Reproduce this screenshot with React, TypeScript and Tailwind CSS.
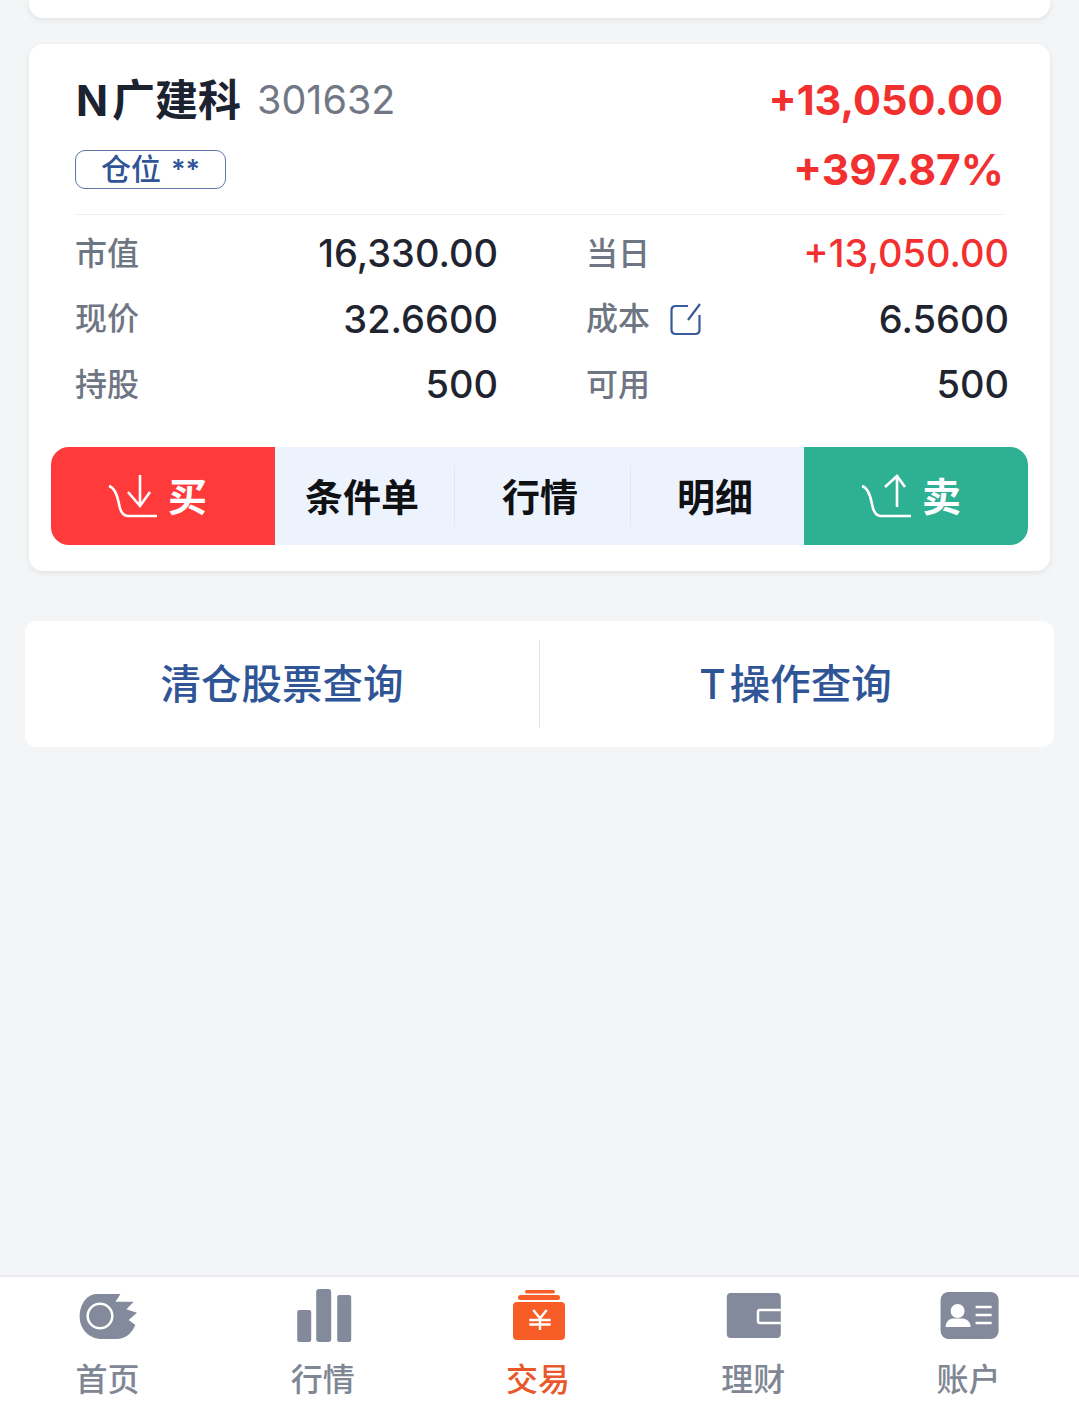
import React from "react";

const rows = [
  { left: "市值", leftValue: "16,330.00", right: "当日", rightValue: "+13,050.00", rise: true },
  { left: "现价", leftValue: "32.6600", right: "成本", rightValue: "6.5600", edit: true },
  { left: "持股", leftValue: "500", right: "可用", rightValue: "500" },
];

const HomeIcon = () => (
  <svg width="60" height="56" viewBox="0 0 60 56" fill="none">
    <path
      d="M19 6H42.4L37.5 13.7H55.7L48.4 21.3L59 24.7L50.7 32L57.4 37C54 44 49 51 38 51H24C11 51 1.7 41 1.7 28.7C1.7 16 9 6 19 6Z"
      fill="#828a9b"
    />
    <circle cx="22" cy="28" r="12.3" stroke="#fff" strokeWidth="2.5" />
  </svg>
);

const MarketIcon = () => (
  <svg width="60" height="56" viewBox="0 0 60 56" fill="#828a9b">
    <rect x="4.2" y="22" width="14" height="32" rx="2" />
    <rect x="23.2" y="1" width="15" height="53" rx="3" />
    <rect x="44.2" y="7" width="14" height="47" rx="2" />
  </svg>
);

const TradeIcon = () => (
  <svg width="60" height="56" viewBox="0 0 60 56" fill="none">
    <rect x="5" y="14" width="52" height="38" rx="4" fill="#f95d27" />
    <rect x="10" y="7" width="42" height="5" rx="2.5" fill="#f95d27" />
    <rect x="17" y="2" width="30" height="3.5" rx="1.75" fill="#f95d27" />
    <path d="M25.3 22L32 30.3L38.7 22M21.3 32H42.7M21.3 36.5H42.7M32 30.3V42" stroke="#fff" strokeWidth="2.4" />
  </svg>
);

const WalletIcon = () => (
  <svg width="60" height="56" viewBox="0 0 60 56" fill="none">
    <rect x="3.8" y="5" width="54" height="45" rx="4" fill="#828a9b" />
    <path d="M57.8 22H37A2 2 0 0 0 35 24V33A2 2 0 0 0 37 35H57.8" stroke="#fff" strokeWidth="2.5" />
  </svg>
);

const AccountIcon = () => (
  <svg width="64" height="56" viewBox="0 0 64 56" fill="none">
    <rect x="4.6" y="4" width="58" height="47" rx="8" fill="#828a9b" />
    <circle cx="21.6" cy="23" r="7" fill="#fff" />
    <path d="M9.6 39C9.6 33 14 30.5 18 30.5H25C30 30.5 34.6 33 34.6 39H9.6Z" fill="#fff" />
    <path d="M39.6 19H55.6M39.6 27H55.6M39.6 35H55.6" stroke="#fff" strokeWidth="2.5" />
  </svg>
);

const tabs = [
  { label: "首页", icon: <HomeIcon /> },
  { label: "行情", icon: <MarketIcon /> },
  { label: "交易", icon: <TradeIcon />, active: true },
  { label: "理财", icon: <WalletIcon /> },
  { label: "账户", icon: <AccountIcon /> },
];

export default function App() {
  return (
    <div className="w-[1079px] h-[1426px] overflow-hidden flex flex-col bg-[#f3f5f7] font-['Inter','Noto_Sans_CJK_SC',sans-serif]">
      <div className="mx-[29px] h-[18px] shrink-0 bg-white rounded-b-[14px] shadow-[0_2px_6px_rgba(0,0,0,0.08)]" />

      <div className="mx-[29px] mt-[26px] pt-[20px] pb-[26px] shrink-0 bg-white rounded-[14px] shadow-[0_2px_6px_rgba(0,0,0,0.08)]">
        <div className="flex items-center justify-between h-[70px] pt-[3px] pl-[47px] pr-[47px]">
          <div className="flex items-center">
            <span className="text-[42px] leading-none font-bold text-[#1c2230]">N</span>
            <span className="ml-[4px] text-[43px] leading-none font-semibold text-[#1c2230]">广建科</span>
            <span className="ml-[16px] text-[39.5px] leading-none text-[#727786]">301632</span>
          </div>
          <span className="text-[41.5px] leading-none font-bold text-[#f23030]">+13,050.00</span>
        </div>
        <div className="flex items-center justify-between h-[70px] pl-[46px] pr-[46px]">
          <div className="flex items-center justify-center gap-[10px] w-[151px] h-[39px] border-[1.5px] border-[#5c77a8] rounded-[10px] text-[#2f5597]">
            <span className="text-[30px] leading-none font-medium">仓位</span>
            <span className="text-[27px] leading-none font-semibold">**</span>
          </div>
          <span className="pt-[2px] text-[42.5px] leading-none font-bold text-[#f23030]">+397.87%</span>
        </div>

        <div className="mx-[46px] mt-[10px] h-px bg-[#eceef1]" />

        <div className="mt-[6px] pl-[46px] pr-[41px] grid grid-cols-2 gap-x-[88px]">
          {rows.map((row) => (
            <React.Fragment key={row.left}>
              <div className="flex items-center justify-between h-[65.5px]">
                <span className="text-[32px] font-medium text-[#6f7683]">{row.left}</span>
                <span className="text-[38px] font-medium text-[#1f2430]">{row.leftValue}</span>
              </div>
              <div className="flex items-center justify-between h-[65.5px]">
                <div className="flex items-center gap-[20px]">
                  <span className="text-[32px] font-medium text-[#6f7683]">{row.right}</span>
                  {row.edit && (
                    <svg width="32" height="33" viewBox="0 0 32 33" fill="none" stroke="#3a5a9c" strokeWidth="2.2">
                      <path d="M18 3H5A4 4 0 0 0 1.5 7V27A4 4 0 0 0 5 31H26A4 4 0 0 0 29.5 27V12" />
                      <path d="M18 17L30 1" />
                    </svg>
                  )}
                </div>
                <span className={`text-[38px] font-medium ${row.rise ? "text-[#f23030]" : "text-[#1f2430]"}`}>
                  {row.rightValue}
                </span>
              </div>
            </React.Fragment>
          ))}
        </div>

        <div className="mx-[22px] mt-[29.5px] h-[98px] flex rounded-[18px] overflow-hidden bg-[#edf3fc]">
          <div className="w-[224px] pl-[57px] flex items-center gap-[10px] bg-[#fe3a3b] text-white">
            <svg width="50" height="44" viewBox="0 0 50 44" fill="none" stroke="#fff" strokeWidth="2.6">
              <path d="M1 12Q8 14 11 30Q13 42 20 42H49" />
              <path d="M32 1V32M20 18L32 32L42 18" />
            </svg>
            <span className="text-[39px] font-semibold leading-none">买</span>
          </div>
          <div className="flex-1 flex items-center text-[38px] font-semibold text-[#0f1115]">
            <div className="w-[179px] pr-[5px] pt-[3px] text-center">条件单</div>
            <div className="w-px h-[62px] bg-[#e3e8f0]" />
            <div className="w-[175px] pr-[5px] pt-[3px] text-center">行情</div>
            <div className="w-px h-[62px] bg-[#e3e8f0]" />
            <div className="flex-1 pr-[5px] pt-[3px] text-center">明细</div>
          </div>
          <div className="w-[224px] pl-[57px] flex items-center gap-[11px] bg-[#2eb093] text-white">
            <svg width="50" height="44" viewBox="0 0 50 44" fill="none" stroke="#fff" strokeWidth="2.6">
              <path d="M1 12Q8 14 11 30Q13 42 20 42H50" />
              <path d="M36 2V33M24 13L36 2L44 13" />
            </svg>
            <span className="text-[39px] font-semibold leading-none">卖</span>
          </div>
        </div>
      </div>

      <div className="mx-[25px] mt-[50px] h-[126px] shrink-0 flex items-center bg-white rounded-[12px] text-[40.5px] font-medium text-[#2f5597]">
        <div className="w-[514px] pt-[3px] text-center">清仓股票查询</div>
        <div className="w-px h-[88px] bg-[#e2e4e8]" />
        <div className="w-[514px] pt-[3px] pr-[3px] text-center">
          T<span className="ml-[4px]">操作查询</span>
        </div>
      </div>

      <div className="flex-1" />

      <div className="h-[151px] shrink-0 bg-white border-t-2 border-[#e8eaee] pt-[11px] pr-[3px] grid grid-cols-5">
        {tabs.map((tab) => (
          <div key={tab.label} className="flex flex-col items-center">
            <div className="h-[56px]">{tab.icon}</div>
            <span className={`mt-[16px] text-[32px] leading-[40px] font-medium ${tab.active ? "text-[#e8582a]" : "text-[#7f8795]"}`}>
              {tab.label}
            </span>
          </div>
        ))}
      </div>
    </div>
  );
}
